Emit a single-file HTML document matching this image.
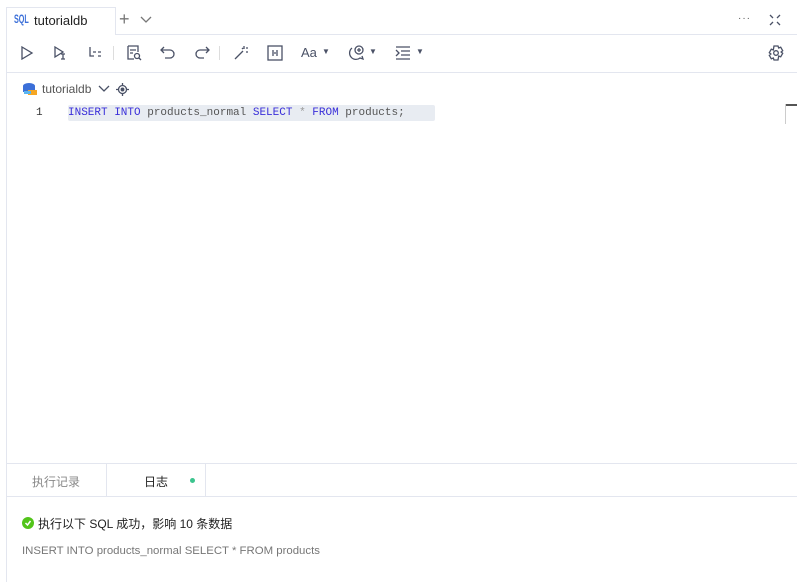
<!DOCTYPE html>
<html><head><meta charset="utf-8"><style>
*{margin:0;padding:0;box-sizing:border-box}
body{width:797px;height:582px;background:#fff;font-family:"Liberation Sans","Noto Sans CJK SC",sans-serif;position:relative;overflow:hidden;color:#333}
.a{position:absolute}
.ic{position:absolute;stroke:#4a5166;fill:none;stroke-width:1.3}
.mono{font-family:"Liberation Mono",monospace;font-size:11px}
</style></head><body>
<div class="a" style="left:6px;top:7px;width:1px;height:575px;background:#e3e6ef"></div>
<div class="a" style="left:6px;top:34px;width:791px;height:1px;background:#e3e6ef"></div>
<div class="a" style="left:6px;top:7px;width:110px;height:28px;border:1px solid #e3e6ef;border-bottom:none;background:#fff"></div>
<div class="a" style="left:14px;top:12px;font-size:12px;font-weight:bold;color:#3b6fd8;transform:scaleX(0.6);transform-origin:left;">SQL</div>
<div class="a" style="left:34px;top:13px;font-size:13px;color:#222">tutorialdb</div>
<div class="a" style="left:119px;top:9px;font-size:18px;color:#777;font-weight:300">+</div>
<svg class="ic" style="left:140px;top:16px" width="12" height="8"><path d="M1 1l5 5 5-5" stroke="#777"/></svg>
<div class="a" style="left:738px;top:13px;font-size:10px;color:#555;letter-spacing:1px">···</div>
<svg class="ic" style="left:769px;top:14px" width="12" height="12"><path d="M1 1l3 3M11 1l-3 3M1 11l3-3M11 11l-3-3" /></svg>
<div class="a" style="left:6px;top:72px;width:791px;height:1px;background:#e3e6ef"></div>
<svg class="ic" style="left:20px;top:46px" width="14" height="14"><path d="M2 1l10 6-10 6z"/></svg>
<svg class="ic" style="left:53px;top:46px" width="14" height="14"><path d="M2 1l8 5-8 5z M10 8v5M8 8h4M8 13h4"/></svg>
<svg class="ic" style="left:88px;top:46px" width="14" height="14"><path d="M2 1v2M2 3v7h4M5 6h3M10 6h3M10 10h3"/></svg>
<div class="a" style="left:113px;top:46px;width:1px;height:14px;background:#ddd"></div>
<svg class="ic" style="left:126px;top:45px" width="16" height="16"><path d="M2 1h10v6M2 1v13h6M4 5h6M4 8h3"/><circle cx="11" cy="11" r="2.5"/><path d="M13 13l2 2"/></svg>
<svg class="ic" style="left:160px;top:46px" width="16" height="14"><path d="M4 1L1 4l3 3M1 4h9a4 4 0 010 8H5"/></svg>
<svg class="ic" style="left:194px;top:46px" width="16" height="14"><path d="M12 1l3 3-3 3M15 4H6a4 4 0 000 8h4"/></svg>
<div class="a" style="left:219px;top:46px;width:1px;height:14px;background:#ddd"></div>
<svg class="ic" style="left:233px;top:45px" width="16" height="16"><path d="M2 14l8-8M11 1v3M13 3h2M9 3l1 1M14 6v2"/></svg>
<svg class="ic" style="left:267px;top:45px" width="16" height="16"><rect x="1" y="1" width="14" height="14"/><path d="M6 5v6M10 5v6M7 8h2"/></svg>
<div class="a" style="left:301px;top:45px;font-size:13px;color:#4a5166">Aa</div>
<div class="a" style="left:322px;top:47px;font-size:8px;color:#4a5166">▼</div>
<svg class="ic" style="left:348px;top:44px" width="18" height="18"><path d="M4 4a6 6 0 108 10l3 1-1-3"/><circle cx="11" cy="6" r="4"/><path d="M11 4v4M9 6h4"/></svg>
<div class="a" style="left:369px;top:47px;font-size:8px;color:#4a5166">▼</div>
<svg class="ic" style="left:395px;top:46px" width="16" height="14"><path d="M1 1h14M6 5h9M6 9h9M1 13h14M1 4l3 3-3 3"/></svg>
<div class="a" style="left:416px;top:47px;font-size:8px;color:#4a5166">▼</div>
<svg class="ic" style="left:768px;top:45px" width="16" height="16"><path d="M6 1h4l.7 2 2-.8 2 3.5-1.6 1.3 1.6 1.3-2 3.5-2-.8L10 15H6l-.7-2-2 .8-2-3.5L2.9 9 1.3 7.7l2-3.5 2 .8z"/><circle cx="8" cy="8" r="2.3"/></svg>
<svg class="a" style="left:22px;top:82px" width="16" height="14"><ellipse cx="7" cy="4" rx="6" ry="3" fill="#3b6fd8"/><rect x="1" y="4" width="12" height="6" fill="#3b6fd8"/><rect x="6" y="8" width="9" height="5" fill="#f5a623"/><rect x="2" y="9" width="7" height="3" fill="#5bb5f0"/></svg>
<div class="a" style="left:42px;top:82px;font-size:12px;color:#555">tutorialdb</div>
<svg class="ic" style="left:98px;top:85px" width="12" height="8"><path d="M1 1l5 5 5-5"/></svg>
<svg class="ic" style="left:116px;top:83px" width="13" height="13"><circle cx="6.5" cy="6.5" r="4"/><circle cx="6.5" cy="6.5" r="1.3" fill="#4a5166"/><path d="M6.5 0v2.5M6.5 10.5V13M0 6.5h2.5M10.5 6.5H13"/></svg>
<div class="a" style="left:68px;top:105px;width:367px;height:16px;background:#e8ecf2;border-radius:2px"></div>
<div class="a mono" style="left:36px;top:107px;color:#333">1</div>
<div class="a mono" style="left:68px;top:107px;color:#555;white-space:pre"><span style="color:#3a2fd9">INSERT INTO</span> products_normal <span style="color:#3a2fd9">SELECT</span> <span style="color:#999">*</span> <span style="color:#3a2fd9">FROM</span> products;</div>
<div class="a" style="left:785px;top:104px;width:12px;height:2px;background:#555"></div>
<div class="a" style="left:785px;top:104px;width:1px;height:20px;background:#ccc"></div>
<div class="a" style="left:6px;top:463px;width:791px;height:1px;background:#e3e6ef"></div>
<div class="a" style="left:6px;top:496px;width:791px;height:1px;background:#e3e6ef"></div>
<div class="a" style="left:106px;top:464px;width:1px;height:32px;background:#e3e6ef"></div>
<div class="a" style="left:205px;top:464px;width:1px;height:32px;background:#e3e6ef"></div>
<div class="a" style="left:32px;top:473px;font-size:12px;color:#888">执行记录</div>
<div class="a" style="left:144px;top:473px;font-size:12px;color:#222">日志</div>
<div class="a" style="left:190px;top:478px;width:5px;height:5px;border-radius:50%;background:#3cc48e"></div>
<div class="a" style="left:22px;top:517px;width:12px;height:12px;border-radius:50%;background:#52c41a"></div>
<svg class="a" style="left:22px;top:517px" width="12" height="12"><path d="M3.5 6l2 2 3-4" stroke="#fff" stroke-width="1.5" fill="none"/></svg>
<div class="a" style="left:38px;top:515px;font-size:12px;color:#222">执行以下 SQL 成功，影响 10 条数据</div>
<div class="a" style="left:22px;top:545px;font-size:11.4px;color:#777">INSERT INTO products_normal SELECT * FROM products</div>
</body></html>
